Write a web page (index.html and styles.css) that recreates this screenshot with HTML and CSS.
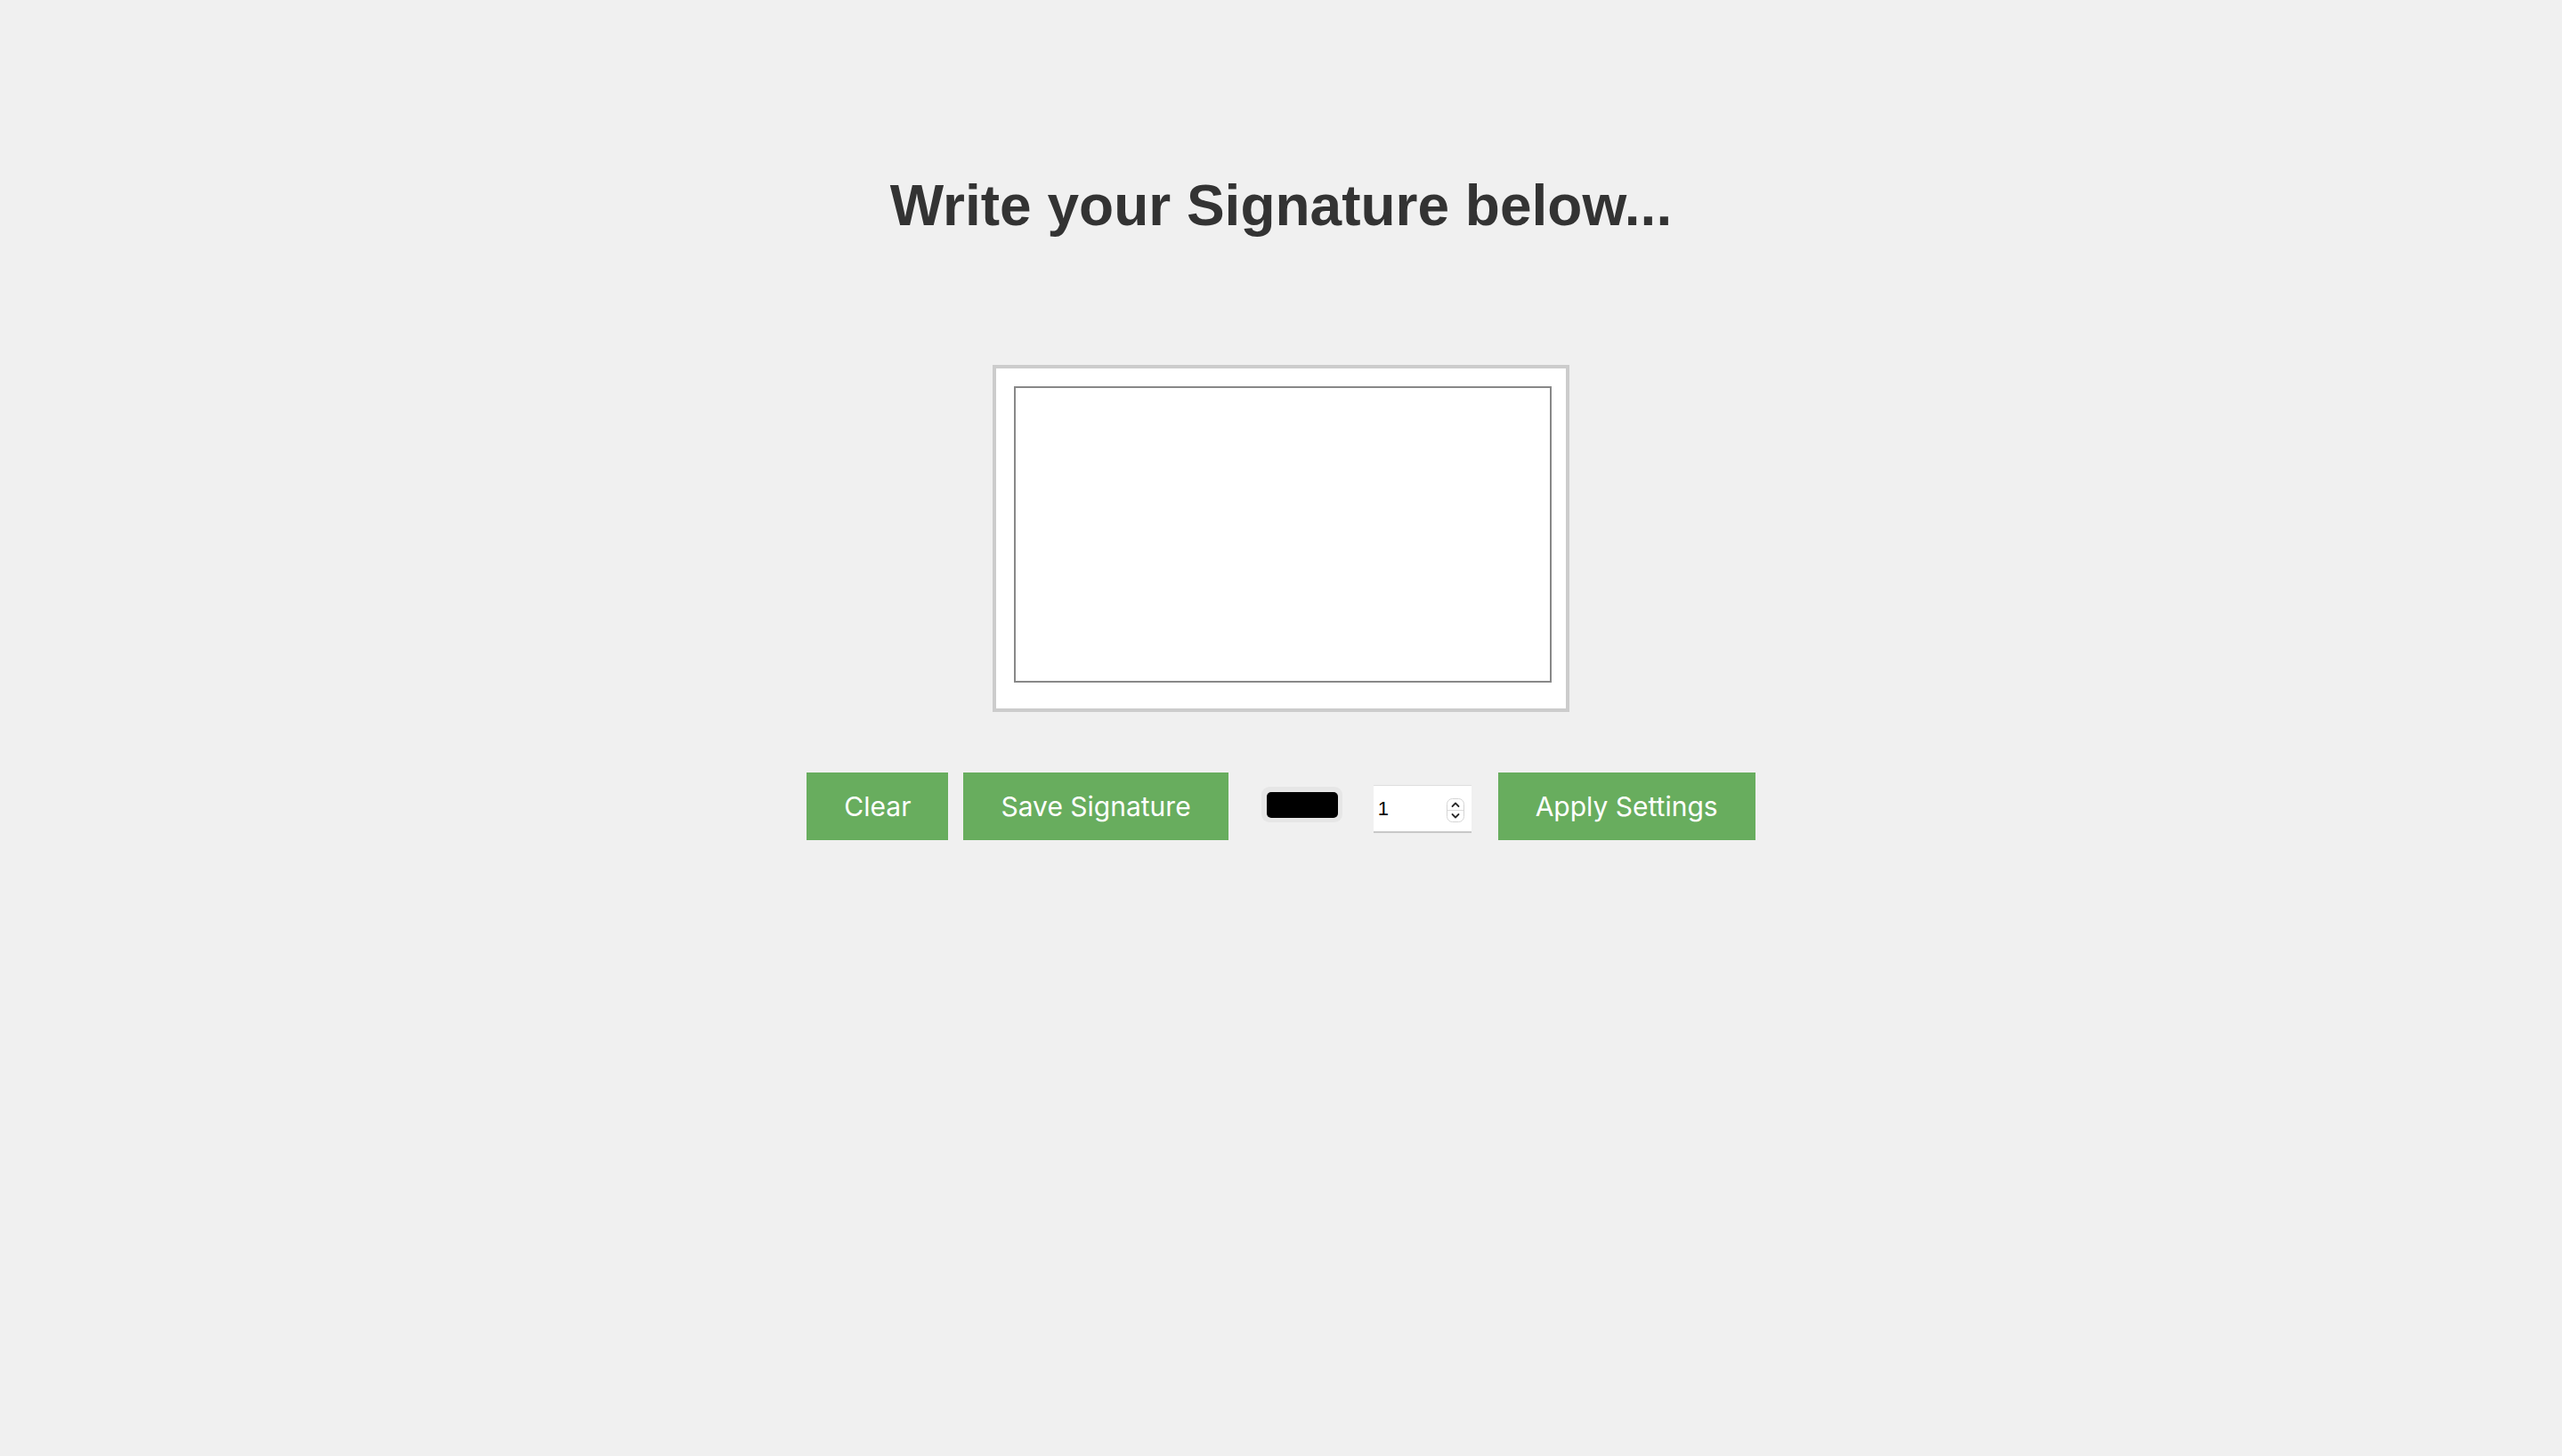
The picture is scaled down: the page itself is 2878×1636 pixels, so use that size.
FILE: index.html
```html
<!DOCTYPE html>
<html lang="en">
<head>
<meta charset="utf-8">
<title>Signature Pad</title>
<link rel="stylesheet" href="styles.css">
</head>
<body>
<main class="page">
  <h1 class="title">Write your Signature below...</h1>
  <div class="pad-frame">
    <canvas class="pad" width="600" height="329"></canvas>
  </div>
  <div class="controls">
    <button class="btn btn-clear" type="button">Clear</button>
    <button class="btn btn-save" type="button">Save Signature</button>
    <input class="color-pick" type="color" value="#000000">
    <span class="num-wrap">
      <input class="num" type="number" value="1" min="1" max="10">
      <span class="spinner" aria-hidden="true">
        <svg width="20" height="27" viewBox="0 0 20 27">
          <rect x="0.5" y="0.5" width="19" height="26" rx="6" ry="6" fill="#fff" stroke="#d4d4d4"/>
          <line x1="1" y1="13.5" x2="19" y2="13.5" stroke="#dcdcdc"/>
          <path d="M6.5 9 L10 5.5 L13.5 9" fill="none" stroke="#2a2a2a" stroke-width="1.8" stroke-linecap="round" stroke-linejoin="round"/>
          <path d="M6.5 18 L10 21.5 L13.5 18" fill="none" stroke="#2a2a2a" stroke-width="1.8" stroke-linecap="round" stroke-linejoin="round"/>
        </svg>
      </span>
    </span>
    <button class="btn btn-apply" type="button">Apply Settings</button>
  </div>
</main>
</body>
</html>
```

FILE: styles.css
```css
html, body {
  margin: 0;
  padding: 0;
  background: #f0f0f0;
}

.page {
  display: flex;
  flex-direction: column;
  align-items: center;
  padding-top: 194px;
}

.title {
  margin: 0 0 142px 0;
  font-family: "Liberation Sans", Arial, sans-serif;
  font-weight: bold;
  font-size: 64px;
  line-height: 74px;
  color: #333333;
}

.pad-frame {
  background: #ffffff;
  border: 4px solid #cccccc;
  padding: 20px 16px 29px 20px;
}

.pad {
  display: block;
  width: 600px;
  height: 329px;
  border: 2px solid #888888;
  background: #ffffff;
}

.controls {
  display: flex;
  align-items: flex-start;
  margin-top: 68px;
}

.btn {
  height: 76px;
  padding: 0 42px;
  border: none;
  background: #68ad5e;
  color: #ffffff;
  font-family: Inter, "Noto Sans", sans-serif;
  font-size: 30px;
  cursor: pointer;
}

.btn-save {
  margin-left: 17px;
}

.color-pick {
  -webkit-appearance: none;
  appearance: none;
  margin: 16px 0 0 37px;
  width: 91px;
  height: 40px;
  padding: 6px 5px 5px 6px;
  border: none;
  border-radius: 9px;
  background: #e6e6e6;
  cursor: pointer;
}

.color-pick::-webkit-color-swatch-wrapper {
  padding: 0;
}

.color-pick::-webkit-color-swatch {
  border: none;
  border-radius: 5px;
}

.num-wrap {
  position: relative;
  display: block;
  margin: 14px 0 0 35px;
}

.num {
  display: block;
  box-sizing: border-box;
  width: 110px;
  height: 54px;
  margin: 0;
  padding: 0 0 0 5px;
  border: none;
  border-top: 1px solid #dedede;
  border-bottom: 2px solid #c8c8c8;
  background: #ffffff;
  font-family: "Liberation Sans", Arial, sans-serif;
  font-size: 22px;
  color: #000000;
  outline: none;
  -moz-appearance: textfield;
}

.num::-webkit-inner-spin-button,
.num::-webkit-outer-spin-button {
  -webkit-appearance: none;
  margin: 0;
}

.spinner {
  position: absolute;
  left: 82px;
  top: 15px;
  width: 20px;
  height: 27px;
  pointer-events: none;
}

.spinner svg {
  display: block;
}

.btn-apply {
  margin-left: 30px;
}
```
